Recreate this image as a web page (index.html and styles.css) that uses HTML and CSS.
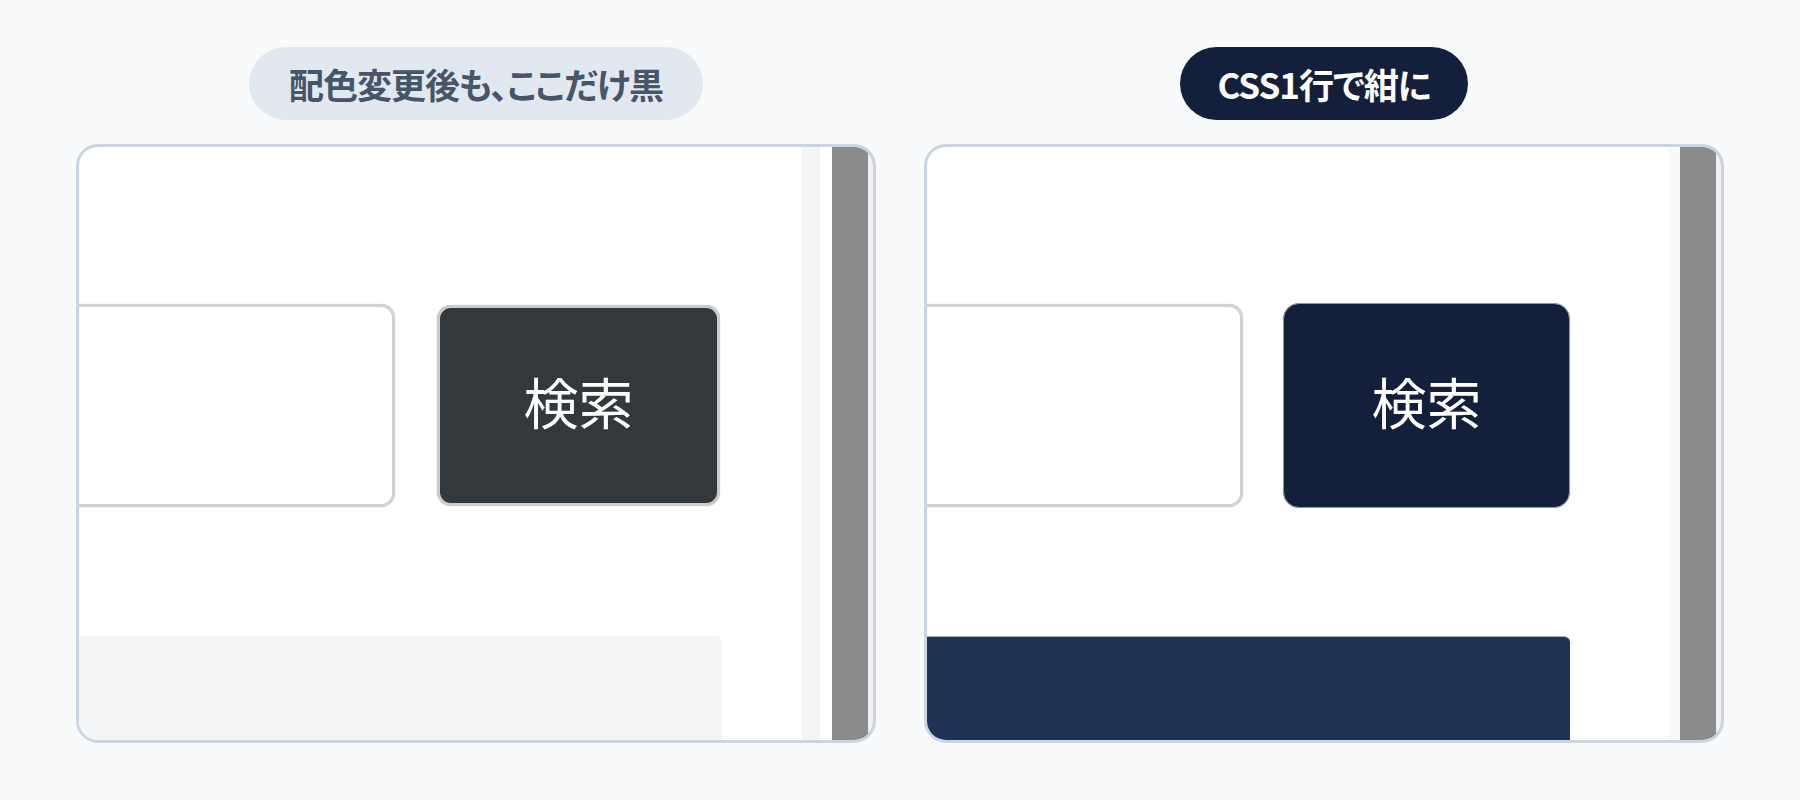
FILE: index.html
```html
<!DOCTYPE html>
<html lang="ja">
<head>
    <meta charset="utf-8">
    <title>検索ボタンの配色</title>
    <link rel="stylesheet" href="styles.css">
</head>
<body>
    <div class="compare">
        <section class="case">
            <div class="tag tag-before">配色変更後も、ここだけ黒</div>
            <div class="frame">
                <div class="page">
                    <div class="search">
                        <div class="search-input"></div>
                        <button class="search-button">検索</button>
                    </div>
                    <div class="result-box"></div>
                </div>
                <div class="side-strip"></div>
                <div class="scrollbar"></div>
            </div>
        </section>

        <section class="case case-after">
            <div class="tag tag-after">CSS1行で紺に</div>
            <div class="frame">
                <div class="page">
                    <div class="search">
                        <div class="search-input"></div>
                        <button class="search-button">検索</button>
                    </div>
                    <div class="result-box"></div>
                </div>
                <div class="side-strip"></div>
                <div class="scrollbar"></div>
            </div>
        </section>
    </div>
</body>
</html>
```

FILE: styles.css
```css
body {
    margin: 0;
    background-color: #f8fafc;
    font-family: "Noto Sans CJK JP", "Noto Sans", sans-serif;
}

.compare {
    display: flex;
    gap: 48px;
    padding: 47px 76px 0;
}

.case {
    width: 800px;
    display: flex;
    flex-direction: column;
    align-items: center;
    gap: 24px;
}

/* caption pills */
.tag {
    height: 73px;
    padding: 0 40px;
    border-radius: 999px;
    display: flex;
    align-items: center;
    font-size: 35px;
    font-weight: 700;
    letter-spacing: -1px;
    font-feature-settings: "palt";
    box-sizing: border-box;
}

.tag-before {
    background-color: #e2e8f0;
    color: #475569;
}

.tag-after {
    padding: 0 37px;
    background-color: #14203b;
    color: #ffffff;
}

/* the browser window crop */
.frame {
    width: 800px;
    height: 599px;
    box-sizing: border-box;
    border: 3px solid #cbd5e1;
    border-radius: 22px;
    overflow: hidden;
    display: flex;
    background-color: #ffffff;
}

.page {
    flex: 1;
    min-width: 0;
    padding-top: 157px;
}

.search {
    display: flex;
    align-items: flex-start;
    gap: 42px;
    margin-left: -60px;
}

.search-input {
    width: 376px;
    height: 203px;
    box-sizing: border-box;
    border: 3px solid #d2d2d2;
    border-radius: 14px;
    background-color: #ffffff;
    box-shadow: 0 0 1px #c0c0c0;
}

.search-button {
    width: 283px;
    height: 201px;
    margin-top: 1px;
    box-sizing: border-box;
    border: 3px solid #c9cbcc;
    border-radius: 14px;
    background-color: #33383c;
    color: #ffffff;
    font-family: "Noto Sans CJK JP", sans-serif;
    font-size: 55px;
    font-weight: 400;
    padding: 0 0 12px;
    box-shadow: 0 0 1px #b0b0b0;
}

.result-box {
    width: 643px;
    height: 200px;
    margin-top: 129px;
    background-color: #f4f5f7;
    border-top-right-radius: 6px;
}

.side-strip {
    width: 18px;
    margin-right: 12px;
    background-color: #f3f4f6;
}

.scrollbar {
    width: 36px;
    background-color: #8b8b8b;
    border-right: 5px solid #f1f1f1;
}

/* after: navy button */
.case-after .search-button {
    width: 287px;
    height: 205px;
    margin-top: -1px;
    margin-left: -2px;
    border: 1px solid #8e98ab;
    border-radius: 16px;
    background-color: #14203b;
}

.case-after .result-box {
    background-color: #1e3456;
    border-top: 1px solid #a9b6c9;
    margin-top: 128px;
}

.case-after .side-strip {
    width: 12px;
    margin-right: 0;
    margin-left: 6px;
    background-color: #fafafa;
}

.case-after .page {
    flex: none;
    width: 735px;
}
```
